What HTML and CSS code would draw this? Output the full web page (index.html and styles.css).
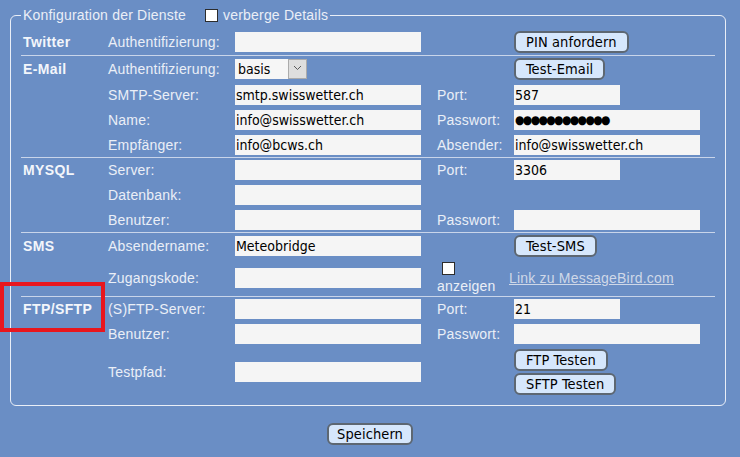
FILE: index.html
```html
<!DOCTYPE html>
<html lang="de">
<head>
<meta charset="utf-8">
<title>Konfiguration der Dienste</title>
<link rel="stylesheet" href="styles.css">
</head>
<body>
<form class="page">
  <fieldset class="services">
    <legend class="services-legend"><span>Konfiguration der Dienste</span><input type="checkbox" class="check legend-check"><span>verberge Details</span></legend>

    <div class="section">
      <div class="cat">Twitter</div>
      <div class="lbl">Authentifizierung:</div>
      <div class="fcell"><input class="field" type="text"></div>
      <div class="rcell"><button type="button" class="btn">PIN anfordern</button></div>
    </div>

    <div class="section">
      <div class="cat">E-Mail</div>
      <div class="lbl">Authentifizierung:</div>
      <div class="fcell">
        <span class="select-wrap"><select class="select"><option>basis</option></select><span class="select-arrow"><svg width="9" height="6" viewBox="0 0 9 6"><path d="M1 1l3.5 3.5L8 1" fill="none" stroke="#5a5a5a" stroke-width="1"/></svg></span></span>
      </div>
      <div class="rcell"><button type="button" class="btn">Test-Email</button></div>

      <div class="lbl">SMTP-Server:</div>
      <div class="fcell"><input class="field" type="text" value="smtp.swisswetter.ch"></div>
      <div class="rlbl">Port:</div>
      <div class="rcell"><input class="field short" type="text" value="587"></div>

      <div class="lbl">Name:</div>
      <div class="fcell"><input class="field" type="text" value="info@swisswetter.ch"></div>
      <div class="rlbl">Passwort:</div>
      <div class="rcell"><input class="field dots" type="text" value="●●●●●●●●●●●●"></div>

      <div class="lbl">Empfänger:</div>
      <div class="fcell"><input class="field" type="text" value="info@bcws.ch"></div>
      <div class="rlbl">Absender:</div>
      <div class="rcell"><input class="field" type="text" value="info@swisswetter.ch"></div>
    </div>

    <div class="section">
      <div class="cat">MYSQL</div>
      <div class="lbl">Server:</div>
      <div class="fcell"><input class="field" type="text"></div>
      <div class="rlbl">Port:</div>
      <div class="rcell"><input class="field short" type="text" value="3306"></div>

      <div class="lbl">Datenbank:</div>
      <div class="fcell"><input class="field" type="text"></div>

      <div class="lbl">Benutzer:</div>
      <div class="fcell"><input class="field" type="text"></div>
      <div class="rlbl">Passwort:</div>
      <div class="rcell"><input class="field" type="text"></div>
    </div>

    <div class="section">
      <div class="cat">SMS</div>
      <div class="lbl">Absendername:</div>
      <div class="fcell"><input class="field" type="text" value="Meteobridge"></div>
      <div class="rcell"><button type="button" class="btn">Test-SMS</button></div>

      <div class="lbl">Zugangskode:</div>
      <div class="fcell"><input class="field" type="text"></div>
      <div class="rlbl show-cell"><input type="checkbox" class="check show-check"><span>anzeigen</span></div>
      <div class="rcell"><a href="#" class="link">Link zu MessageBird.com</a></div>
    </div>

    <div class="section">
      <div class="cat">FTP/SFTP</div>
      <div class="lbl">(S)FTP-Server:</div>
      <div class="fcell"><input class="field" type="text"></div>
      <div class="rlbl">Port:</div>
      <div class="rcell"><input class="field short" type="text" value="21"></div>

      <div class="lbl">Benutzer:</div>
      <div class="fcell"><input class="field" type="text"></div>
      <div class="rlbl">Passwort:</div>
      <div class="rcell"><input class="field" type="text"></div>

      <div class="lbl">Testpfad:</div>
      <div class="fcell"><input class="field" type="text"></div>
      <div class="rcell btn-stack">
        <button type="button" class="btn">FTP Testen</button>
        <button type="button" class="btn">SFTP Testen</button>
      </div>
    </div>
  </fieldset>

  <div class="footer"><button type="button" class="btn save">Speichern</button></div>
</form>
<div class="highlight"></div>
</body>
</html>
```

FILE: styles.css
```css
* {
  box-sizing: border-box;
}

html,
body {
  margin: 0;
  padding: 0;
}

body {
  background: #6a8ec5;
  width: 740px;
  height: 457px;
  overflow: hidden;
  font-family: "Liberation Sans", Arial, sans-serif;
  font-size: 14px;
  letter-spacing: 0.2px;
  color: #eaeff7;
}

.page {
  margin: 0;
  padding-top: 7px;
}

.services {
  margin: 0 0 0 10px;
  width: 716px;
  min-width: 0;
  padding: 6px 10px 8px;
  border: 1px solid #e9eef7;
  border-radius: 6px;
}

.services-legend {
  display: flex;
  align-items: center;
  height: 16px;
  line-height: 16px;
  padding: 0 2px;
  color: #eaeff7;
}

.check {
  -webkit-appearance: none;
  appearance: none;
  width: 13px;
  height: 13px;
  margin: 0;
  border: 1px solid #2c2c2c;
  background: #ffffff;
  flex: none;
}

.legend-check {
  margin: 0 5px 0 19px;
}

.section {
  display: grid;
  grid-template-columns: 85px 127px 202px 77px 1fr;
  row-gap: 5px;
  align-items: center;
  padding: 2px 2px;
}

.section + .section {
  border-top: 1px solid #c9d5ea;
}

.cat {
  grid-column: 1;
  font-weight: bold;
  letter-spacing: 0.4px;
  line-height: 16px;
  color: #f3f6fb;
}

.lbl {
  grid-column: 2;
  line-height: 16px;
}

.fcell {
  grid-column: 3;
  display: flex;
}

.rlbl {
  grid-column: 4;
  line-height: 16px;
}

.rcell {
  grid-column: 5;
  display: flex;
}

.field {
  display: block;
  width: 186px;
  height: 20px;
  margin: 0;
  border: 0;
  padding: 0 1px;
  background: #f5f5f5;
  font-family: "DejaVu Sans Condensed", "DejaVu Sans", sans-serif;
  font-size: 14px;
  letter-spacing: 0;
  color: #000000;
  outline: none;
}

.field.short {
  width: 106px;
}

.field.dots {
  font-size: 12px;
  letter-spacing: -1.6px;
}

.select-wrap {
  display: inline-flex;
  height: 20px;
}

.select {
  -webkit-appearance: none;
  appearance: none;
  width: 53px;
  height: 20px;
  margin: 0;
  border: 0;
  padding: 0 3px;
  background: #f6f6f6;
  font-family: "DejaVu Sans Condensed", "DejaVu Sans", sans-serif;
  font-size: 14px;
  letter-spacing: 0;
  color: #000000;
  outline: none;
}

.select-arrow {
  display: flex;
  align-items: center;
  justify-content: center;
  width: 19px;
  height: 20px;
  padding-bottom: 3px;
  border: 1px solid #ababab;
  background: #dedede;
}

.btn {
  height: 22px;
  margin: 0;
  padding: 0 10px;
  border: 2px solid #5d6772;
  border-radius: 6px;
  background: #d6e7fc;
  font-family: "DejaVu Sans Condensed", "DejaVu Sans", sans-serif;
  font-size: 14.5px;
  letter-spacing: 0.1px;
  line-height: 16px;
  color: #000000;
}

.btn-stack {
  flex-direction: column;
  align-items: flex-start;
  gap: 2px;
}

.show-cell {
  display: flex;
  flex-direction: column;
  align-items: flex-start;
}

.show-check {
  margin: 0 0 3px 5px;
}

.link {
  margin-left: -5px;
  color: #cfd8e8;
  text-decoration: underline;
  line-height: 16px;
}

.footer {
  margin-top: 17px;
  text-align: center;
}

.save {
  padding: 0 8px;
}

.highlight {
  position: absolute;
  left: 0;
  top: 282px;
  width: 105px;
  height: 50px;
  border: 4px solid #e8161e;
}
```
